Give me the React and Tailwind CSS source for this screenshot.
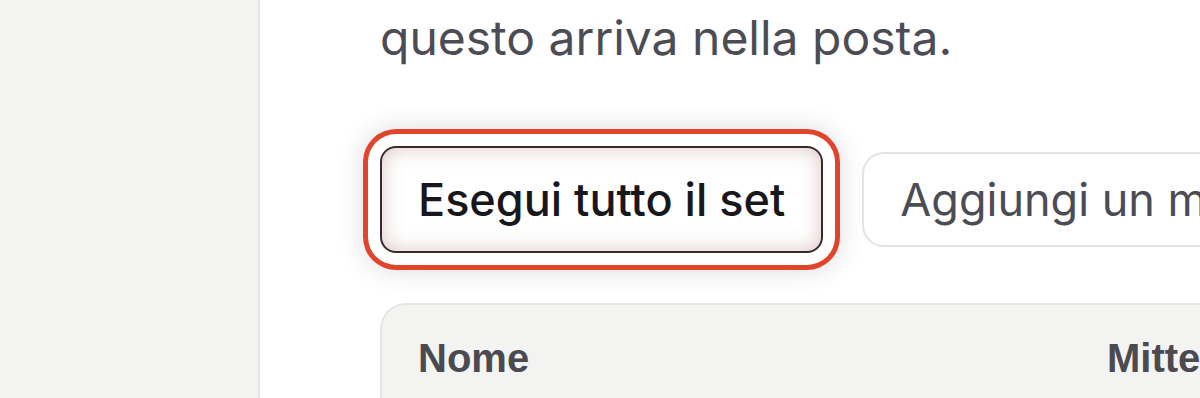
export default function App() {
  return (
    <div className="flex h-[398px] w-[1200px] overflow-hidden bg-white" style={{ fontFamily: "Inter, 'Noto Sans', sans-serif" }}>
      {/* Sidebar */}
      <aside className="w-[260px] shrink-0 bg-[#f3f3f1] border-r-2 border-[#e6e6e3]" />

      {/* Main */}
      <main className="flex-1 min-w-0 pl-[120px] pt-[14px]">
        <p className="text-[48px] leading-[48px] text-[#4c4c55] whitespace-nowrap">questo arriva nella posta.</p>

        <div className="mt-[84px] flex items-center gap-[39px] whitespace-nowrap">
          <button className="h-[107px] px-[36px] rounded-[16px] border-2 border-[#3b2a2c] bg-white text-[45px] font-medium text-[#17171c] shadow-[inset_0_0_20px_rgba(160,90,90,0.35),0_0_0_12px_#ffffff,0_0_0_17px_#e0442b,0_0_26px_18px_rgba(0,0,0,0.13)]">
            Esegui tutto il set
          </button>
          <button className="h-[95px] px-[36px] rounded-[22px] border-2 border-[#e3e3e1] bg-white text-[45px] text-[#4c4c55]">
            Aggiungi un mittente
          </button>
        </div>

        <div className="mt-[50px] h-[120px] rounded-tl-[26px] border-2 border-r-0 border-[#e6e6e3] bg-[#f3f3f1] flex pt-[33px] pl-[36px]" style={{ fontFamily: "'Liberation Sans', Arial, sans-serif" }}>
          <span className="w-[689px] shrink-0 text-[40px] leading-[40px] font-bold text-[#4a4a50]">Nome</span>
          <span className="text-[40px] leading-[40px] font-bold text-[#4a4a50]">Mittente</span>
        </div>
      </main>
    </div>
  );
}
